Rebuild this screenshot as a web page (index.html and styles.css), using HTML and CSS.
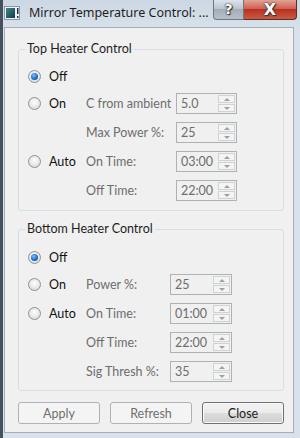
FILE: index.html
```html
<!DOCTYPE html>
<html lang="en">
<head>
  <meta charset="UTF-8" />
  <meta name="viewport" content="width=device-width, initial-scale=1.0" />
  <title>Mirror Temperature Control</title>
  <link rel="stylesheet" href="styles.css">
</head>
<body>
  <div class="window">
    <div class="titlebar">
      <svg class="app-icon" width="16" height="14" viewBox="0 0 16 14">
        <defs>
          <linearGradient id="scr" x1="0" y1="0" x2="1" y2="1">
            <stop offset="0" stop-color="#3f8a86" />
            <stop offset="1" stop-color="#16384a" />
          </linearGradient>
        </defs>
        <rect x="0.5" y="0.5" width="15" height="13" fill="#eef2f6" stroke="#8a96a3" />
        <rect x="2" y="2" width="9" height="10" fill="url(#scr)" />
        <rect x="13" y="2" width="1.5" height="6" fill="#1d2f3c" />
        <rect x="13" y="10" width="1.5" height="2" fill="#1d2f3c" />
      </svg>
      <span class="caption">Mirror Temperature Control: ...</span>
      <div class="caption-btn help">?</div>
      <div class="caption-btn close">X</div>
    </div>

    <div class="client">
      <fieldset class="group top">
        <legend>Top Heater Control</legend>
        <div class="rows">
          <div class="radio checked"><span class="dot"></span>Off</div>
          <div></div><div></div>

          <div class="radio"><span class="dot"></span>On</div>
          <div class="lbl">C from ambient</div>
          <div class="spin"><span class="val">5.0</span><span class="arrows"><i class="up"></i><i class="down"></i></span></div>

          <div></div>
          <div class="lbl">Max Power %:</div>
          <div class="spin"><span class="val">25</span><span class="arrows"><i class="up"></i><i class="down"></i></span></div>

          <div class="radio"><span class="dot"></span>Auto</div>
          <div class="lbl">On Time:</div>
          <div class="spin"><span class="val">03:00</span><span class="arrows"><i class="up"></i><i class="down"></i></span></div>

          <div></div>
          <div class="lbl">Off Time:</div>
          <div class="spin"><span class="val">22:00</span><span class="arrows"><i class="up"></i><i class="down"></i></span></div>
        </div>
      </fieldset>

      <fieldset class="group bottom">
        <legend>Bottom Heater Control</legend>
        <div class="rows">
          <div class="radio checked"><span class="dot"></span>Off</div>
          <div></div><div></div>

          <div class="radio"><span class="dot"></span>On</div>
          <div class="lbl">Power %:</div>
          <div class="spin"><span class="val">25</span><span class="arrows"><i class="up"></i><i class="down"></i></span></div>

          <div class="radio"><span class="dot"></span>Auto</div>
          <div class="lbl">On Time:</div>
          <div class="spin"><span class="val">01:00</span><span class="arrows"><i class="up"></i><i class="down"></i></span></div>

          <div></div>
          <div class="lbl">Off Time:</div>
          <div class="spin"><span class="val">22:00</span><span class="arrows"><i class="up"></i><i class="down"></i></span></div>

          <div></div>
          <div class="lbl">Sig Thresh %:</div>
          <div class="spin"><span class="val">35</span><span class="arrows"><i class="up"></i><i class="down"></i></span></div>
        </div>
      </fieldset>

      <div class="buttons">
        <button class="btn disabled">Apply</button>
        <button class="btn disabled">Refresh</button>
        <button class="btn default">Close</button>
      </div>
    </div>
  </div>
</body>
</html>
```

FILE: styles.css
```css
body {
  margin: 0;
  font-family: Lato, "Noto Sans", sans-serif;
  font-size: 12.5px;
  color: #1e1e1e;
}
.window {
  width: 300px;
  height: 438px;
  box-sizing: border-box;
  display: flex;
  flex-direction: column;
  background: linear-gradient(#cbd7e3, #d9e2eb 30px, #d9e2eb);
  border-left: 3px solid #46515d;
  padding: 0 6px 5px 1px;
}
.titlebar {
  height: 27px;
  flex: none;
  display: flex;
  align-items: flex-start;
}
.app-icon {
  margin: 6px 0 0 0;
  flex: none;
}
.caption {
  margin: 4px 0 0 9px;
  font-family: "Noto Sans", sans-serif;
  font-size: 12.5px;
  line-height: 18px;
  color: #1e1e1e;
  flex: 1;
  white-space: nowrap;
}
.caption-btn {
  height: 20px;
  box-sizing: border-box;
  color: #fff;
  font-family: "DejaVu Sans", sans-serif;
  font-weight: bold;
  text-align: center;
  text-shadow: 0 0 1px #222, 0 0 2px #333, 1px 1px 1px #333;
}
.help {
  width: 31px;
  font-size: 14px;
  line-height: 19px;
  border: 1px solid #6d7884;
  border-top: none;
  border-radius: 0 0 0 4px;
  background: linear-gradient(#dde3ea, #b9c2cc 50%, #a4aeb9 50%, #b7c0ca);
}
.close {
  width: 53px;
  margin-right: -3px;
  font-size: 16px;
  line-height: 20px;
  border: 1px solid #5e2b26;
  border-top: none;
  border-left: none;
  border-radius: 0 0 4px 0;
  background: linear-gradient(#e3a398, #cc5a4b 50%, #b8321f 50%, #c85b45);
}
.client {
  flex: 1;
  background: #f0f0f0;
  border: 1px solid #a3afbb;
  padding-top: 13px;
}
.group {
  margin: 0 0 0 13px;
  padding: 0;
  width: 266px;
  box-sizing: border-box;
  border: 1px solid #d5dfe5;
  border-radius: 3px;
  min-inline-size: auto;
}
.group legend {
  margin-left: 6px;
  padding: 0 2px;
  line-height: 16px;
  color: #1e1e1e;
}
.group.bottom {
  margin-top: 10px;
}
.rows {
  display: grid;
  grid-template-rows: 17px repeat(4, 21px);
  row-gap: 8px;
  align-items: center;
  padding: 11px 0 9px 9px;
}
.top .rows {
  grid-template-columns: 58px 90px 61px;
}
.bottom .rows {
  grid-template-columns: 58px 84px 62px;
  padding-top: 12px;
  padding-bottom: 8px;
}
.radio {
  display: flex;
  align-items: center;
  gap: 8px;
  color: #111;
}
.dot {
  width: 13px;
  height: 13px;
  box-sizing: border-box;
  border: 1px solid #8f9294;
  border-radius: 50%;
  background: radial-gradient(circle at 50% 40%, #ffffff, #e4e4e4 60%, #cfcfcf);
  display: grid;
  place-items: center;
}
.radio.checked .dot::after {
  content: "";
  width: 7px;
  height: 7px;
  border-radius: 50%;
  background: radial-gradient(circle at 40% 35%, #7fc0ff, #1c6fc9 55%, #0b3f7e);
}
.lbl {
  color: #6d6d6d;
  white-space: nowrap;
}
.spin {
  height: 21px;
  box-sizing: border-box;
  display: flex;
  border: 1px solid #adb2b5;
  background: #f0f0f0;
}
.val {
  flex: 1;
  padding-left: 4px;
  line-height: 19px;
  color: #6d6d6d;
}
.arrows {
  width: 17px;
  display: flex;
  flex-direction: column;
  padding: 1px 1px 1px 0;
  gap: 1px;
}
.arrows i {
  flex: 1;
  border: 1px solid #cfd3d6;
  background: #f4f4f4;
  display: grid;
  place-items: center;
}
.arrows i::after {
  content: "";
  width: 0;
  height: 0;
  border-left: 3px solid transparent;
  border-right: 3px solid transparent;
}
.arrows .up::after {
  border-bottom: 3px solid #a0a0a0;
}
.arrows .down::after {
  border-top: 3px solid #a0a0a0;
}
.buttons {
  display: flex;
  gap: 10px;
  margin: 11px 0 0 13px;
}
.btn {
  width: 82px;
  height: 22px;
  box-sizing: border-box;
  font-family: inherit;
  font-size: 12.5px;
  border-radius: 3px;
  padding: 0;
}
.btn.disabled {
  border: 1px solid #adb2b5;
  background: #f4f4f4;
  color: #6f6f6f;
}
.btn.default {
  border: 1px solid #707070;
  box-shadow: inset 0 0 0 1px #fafafa;
  background: linear-gradient(#f2f2f2, #ebebeb 50%, #dddddd 50%, #cfcfcf);
  color: #1a1a1a;
}
```
